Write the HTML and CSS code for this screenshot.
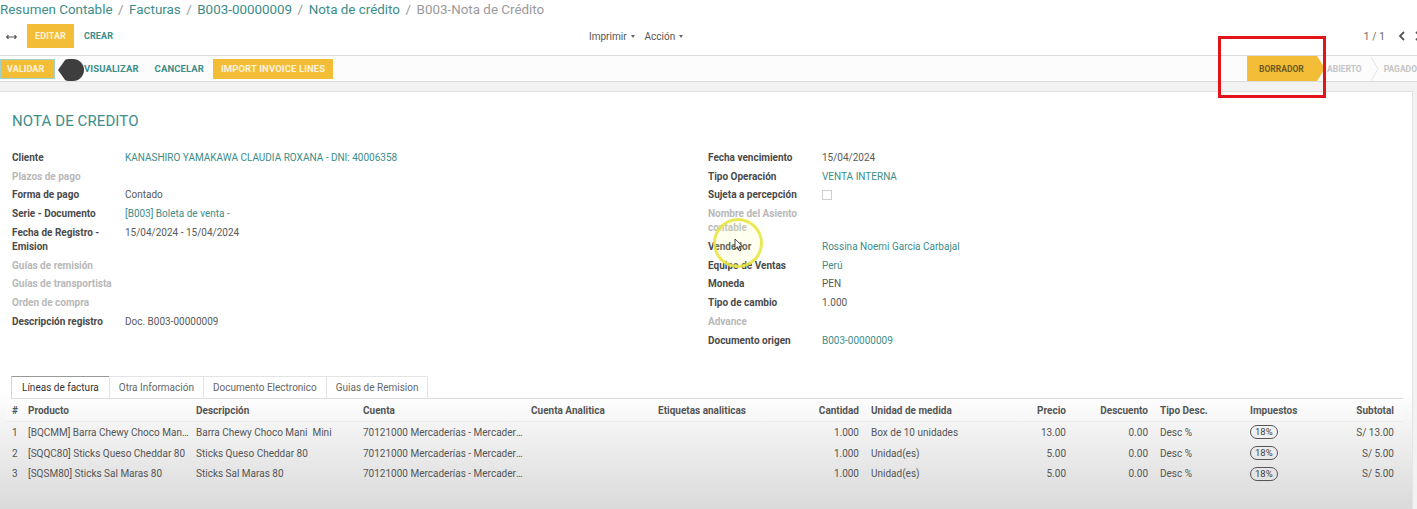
FILE: index.html
```html
<!DOCTYPE html>
<html lang="es">
<head>
<meta charset="utf-8">
<title>B003-Nota de Crédito</title>
<link rel="stylesheet" href="styles.css">
</head>
<body>
<div class="page">
  <div class="cp">
    <div class="bc"><span class="lnk">Resumen Contable</span><span class="sep">/</span><span class="lnk">Facturas</span><span class="sep">/</span><span class="lnk">B003-00000009</span><span class="sep">/</span><span class="lnk">Nota de crédito</span><span class="sep">/</span><span class="cur">B003-Nota de Crédito</span></div>
    <div class="tb">
      <div class="tb-left">
        <svg class="expand" width="11" height="6" viewBox="0 0 11 6"><path d="M0.5 3H10.5M0.5 3L2.5 1.2M0.5 3L2.5 4.8M10.5 3L8.5 1.2M10.5 3L8.5 4.8" stroke="#555" stroke-width="1.2" fill="none"/></svg>
        <span class="btn btn-y">EDITAR</span>
        <span class="btn btn-l">CREAR</span>
      </div>
      <div class="tb-mid">
        <span class="dd">Imprimir <i class="caret"></i></span>
        <span class="dd">Acción <i class="caret"></i></span>
      </div>
      <div class="tb-right">
        <span class="pg">1 / 1</span>
        <svg width="8" height="10" viewBox="0 0 8 10"><path d="M6 1L2 5L6 9" stroke="#555" stroke-width="1.8" fill="none"/></svg>
        <svg width="8" height="10" viewBox="0 0 8 10"><path d="M2 1L6 5L2 9" stroke="#555" stroke-width="1.8" fill="none"/></svg>
      </div>
    </div>
  </div>
  <div class="sb">
    <div class="sb-left">
      <span class="btn btn-y btn-focus">VALIDAR</span>
      <span class="btn btn-l">VISUALIZAR</span>
      <span class="btn btn-l">CANCELAR</span>
      <span class="btn btn-y">IMPORT INVOICE LINES</span>
    </div>
    <div class="states">
      <span class="st st-on">BORRADOR</span>
      <span class="st">ABIERTO</span>
      <svg class="chev" width="9" height="24" viewBox="0 0 9 24"><path d="M1 0L8 12L1 24" stroke="#e4e4e4" stroke-width="1" fill="none"/></svg>
      <span class="st">PAGADO</span>
    </div>
  </div>
  <div class="gap"></div>
  <div class="sheet">
    <h1 class="title">NOTA DE CREDITO</h1>
    <div class="form">
      <div class="grp">
        <div class="lb">Cliente</div><div class="vl lnk">KANASHIRO YAMAKAWA CLAUDIA ROXANA - DNI: 40006358</div>
        <div class="lb mut">Plazos de pago</div><div class="vl"></div>
        <div class="lb">Forma de pago</div><div class="vl">Contado</div>
        <div class="lb">Serie - Documento</div><div class="vl lnk">[B003] Boleta de venta -</div>
        <div class="lb">Fecha de Registro -<br>Emision</div><div class="vl">15/04/2024 - 15/04/2024</div>
        <div class="lb mut">Guías de remisión</div><div class="vl"></div>
        <div class="lb mut">Guías de transportista</div><div class="vl"></div>
        <div class="lb mut">Orden de compra</div><div class="vl"></div>
        <div class="lb">Descripción registro</div><div class="vl">Doc. B003-00000009</div>
      </div>
      <div class="grp">
        <div class="lb">Fecha vencimiento</div><div class="vl">15/04/2024</div>
        <div class="lb">Tipo Operación</div><div class="vl lnk">VENTA INTERNA</div>
        <div class="lb">Sujeta a percepción</div><div class="vl"><span class="chk"></span></div>
        <div class="lb mut">Nombre del Asiento<br>contable</div><div class="vl"></div>
        <div class="lb">Vendedor</div><div class="vl lnk">Rossina Noemi Garcia Carbajal</div>
        <div class="lb">Equipo de Ventas</div><div class="vl lnk">Perú</div>
        <div class="lb">Moneda</div><div class="vl">PEN</div>
        <div class="lb">Tipo de cambio</div><div class="vl">1.000</div>
        <div class="lb mut">Advance</div><div class="vl"></div>
        <div class="lb">Documento origen</div><div class="vl lnk">B003-00000009</div>
      </div>
    </div>
    <div class="tabs">
      <span class="tab tab-on">Líneas de factura</span>
      <span class="tab">Otra Información</span>
      <span class="tab">Documento Electronico</span>
      <span class="tab">Guias de Remision</span>
    </div>
    <div class="lines">
      <div class="row head">
        <span>#</span><span>Producto</span><span>Descripción</span><span>Cuenta</span><span>Cuenta Analitica</span><span>Etiquetas analiticas</span><span class="r">Cantidad</span><span>Unidad de medida</span><span class="r">Precio</span><span class="r">Descuento</span><span>Tipo Desc.</span><span>Impuestos</span><span class="r">Subtotal</span>
      </div>
      <div class="row">
        <span>1</span><span class="tr">[BQCMM] Barra Chewy Choco Mani Mini</span><span>Barra Chewy Choco Mani&nbsp; Mini</span><span class="tr">70121000 Mercaderías - Mercaderías</span><span></span><span></span><span class="r">1.000</span><span>Box de 10 unidades</span><span class="r">13.00</span><span class="r">0.00</span><span>Desc %</span><span><b class="tax">18%</b></span><span class="r">S/ 13.00</span>
      </div>
      <div class="row">
        <span>2</span><span class="tr">[SQQC80] Sticks Queso Cheddar 80</span><span>Sticks Queso Cheddar 80</span><span class="tr">70121000 Mercaderías - Mercaderías</span><span></span><span></span><span class="r">1.000</span><span>Unidad(es)</span><span class="r">5.00</span><span class="r">0.00</span><span>Desc %</span><span><b class="tax">18%</b></span><span class="r">S/ 5.00</span>
      </div>
      <div class="row">
        <span>3</span><span class="tr">[SQSM80] Sticks Sal Maras 80</span><span>Sticks Sal Maras 80</span><span class="tr">70121000 Mercaderías - Mercaderías</span><span></span><span></span><span class="r">1.000</span><span>Unidad(es)</span><span class="r">5.00</span><span class="r">0.00</span><span>Desc %</span><span><b class="tax">18%</b></span><span class="r">S/ 5.00</span>
      </div>
    </div>
  </div>
  <div class="blob"></div>
  <div class="hl"></div>
  <svg class="cursor" width="10" height="14" viewBox="0 0 10 14"><path d="M1 1V11L3.5 8.8L5.5 13L7 12.3L5 8.2H8.5Z" fill="#fff" stroke="#333" stroke-width="0.9"/></svg>
  <div class="redbox"></div>
</div>
</body>
</html>
```

FILE: styles.css
```css
* { box-sizing: border-box; margin: 0; padding: 0; }
html, body { width: 1417px; height: 509px; overflow: hidden; }
body { font-family: Roboto, "Noto Sans", sans-serif; color: #555; background: #f2f2f2; }
.page { position: relative; width: 1417px; height: 509px; overflow: hidden; }

.lnk { color: #3d8d89; }

/* control panel */
.cp { background: #fff; }
.bc { height: 21px; font-size: 13.4px; line-height: 20px; white-space: nowrap; padding-left: 0; }
.bc .sep { color: #999; margin: 0 5.5px; }
.bc .cur { color: #9a9a9a; }

.tb { display: grid; grid-template-columns: 589px 1fr auto; align-items: center; height: 35px; border-bottom: 1px solid #dcdcdc; padding-bottom: 4px; }
.tb-left { display: flex; align-items: center; padding-left: 6px; }
.expand { margin-right: 10px; margin-top: 2px; }
.btn { display: inline-flex; align-items: center; font-size: 9px; font-weight: 700; letter-spacing: 0.1px; white-space: nowrap; }
.btn-y { background: #f3bd37; color: #fdf3dc; padding: 0 7px; }
.btn-l { color: #3d8d89; padding: 0 10px; }
.tb .btn { height: 24px; }
.tb .btn-y { padding: 0 7px 0 7px; width: 47px; justify-content: center; }
.tb-mid { display: flex; gap: 10px; font-size: 10px; color: #555; }
.dd { display: inline-flex; align-items: center; gap: 4px; }
.caret { display: inline-block; width: 0; height: 0; border-left: 2.5px solid transparent; border-right: 2.5px solid transparent; border-top: 3px solid #666; }
.tb-right { display: flex; align-items: center; gap: 8px; margin-right: -5px; font-size: 10px; color: #666; }
.pg { margin-right: 5px; letter-spacing: 0.2px; }

/* statusbar */
.sb { display: flex; align-items: center; height: 26px; background: #fcfcfc; border-bottom: 1px solid #dcdcdc; }
.sb-left { display: flex; align-items: center; }
.sb .btn { height: 20px; font-size: 9.5px; }
.sb .btn-l { padding: 0 8px; }
.sb .btn-y { padding: 0 8px; }
.sb .btn-focus { border: 1px solid #9fd1c9; padding: 0 6px; margin-right: 22px; width: 55px; font-size: 9px; }
.sb-left .btn-l:nth-child(2) { padding-left: 7px; padding-right: 8px; }
.sb-left .btn-l:nth-child(3) { padding-right: 9px; }
.states { margin-left: auto; margin-right: -8px; display: flex; align-items: center; height: 25px; }
.st { font-size: 8.5px; font-weight: 700; color: #c4c4c4; padding: 0 8px 0 2px; height: 25px; display: inline-flex; align-items: center; }
.st-on { background: #f3bd37; color: #6e5a1f; width: 78px; padding: 0 0 0 12px; margin-right: 0; clip-path: polygon(0 0, 70px 0, 78px 50%, 70px 100%, 0 100%); }
.chev { margin-right: 3px; }

.gap { height: 9px; background: #f2f2f2; }

/* sheet */
.sheet { width: 1413px; height: 420px; background: #fff; border-top: 1px solid #e0e0e0; border-right: 1px solid #e4e4e4; padding: 20px 9px 0 12px;
  background: linear-gradient(#ffffff 0, #ffffff 300px, #f6f6f6 325px, #e8e8e8 370px, #d9d9d9 420px); }
.title { font-size: 15px; font-weight: 400; line-height: 18px; color: #3d8d89; letter-spacing: 0.1px; }

.form { display: grid; grid-template-columns: 696px 696px; margin-top: 18.5px; }
.grp { display: grid; grid-template-columns: 113px 1fr; align-content: start; }
.grp + .grp { grid-template-columns: 114px 1fr; }
.lb, .vl { font-size: 10px; line-height: 14px; padding: 2.375px 0; }
.lb { font-weight: 700; color: #4a4a4a; }
.lb.mut { color: #b8b8b8; }
.vl { color: #5a5a5a; }
.vl.lnk { color: #3d8d89; }
.chk { display: inline-block; width: 10px; height: 10px; border: 1px solid #cfcfcf; background: #fff; margin-top: 2px; vertical-align: top; }

.tabs { display: flex; margin-top: 26px; margin-left: -1px; border-bottom: 1px solid #dcdcdc; height: 23px; }
.tab { font-size: 10px; color: #666; line-height: 21px; padding: 0 9px; border: 1px solid #e3e3e3; border-bottom: none; background: #fff; margin-right: -1px; }
.tab-on { color: #333; border-color: #d5d5d5; border-top-color: #999; padding: 0 10px; }

.lines { margin-left: -6px; }
.row { display: grid; grid-template-columns: 16px 168px 167px 168px 127px 148px 65px 135px 72px 82px 90px 90px 66px; height: 20.75px; align-items: center; font-size: 10px; color: #555; }
.row > span { padding: 0 2px 0 6px; white-space: nowrap; overflow: hidden; text-overflow: ellipsis; }
.row > span.tr { padding-right: 0; }
.row > span:first-child { padding: 0 0 0 6px; text-overflow: clip; }
.row > span.r { text-align: right; padding: 0 6px 0 2px; }
.row.head { height: 23px; padding-top: 1px; font-weight: 700; color: #555; background: linear-gradient(#fdfdfd, #f6f6f6); border-bottom: 1px solid #ececec; }
.tax { display: inline-block; font-weight: 400; font-size: 9.5px; color: #444; border: 1.5px solid #555; border-radius: 8px; padding: 0 4px; line-height: 12px; vertical-align: middle; }

/* overlays */
.blob { position: absolute; left: 58px; top: 59px; width: 26px; height: 22px; background: #3e3e3e; clip-path: polygon(0 50%, 30% 0, 100% 0, 100% 100%, 30% 100%); border-radius: 12px; }
.hl { position: absolute; left: 713px; top: 218px; width: 50px; height: 50px; border-radius: 50%; border: 3px solid rgba(232, 228, 60, 0.85); background: rgba(255, 255, 170, 0.18); }
.cursor { position: absolute; left: 734px; top: 238px; }
.redbox { position: absolute; left: 1218px; top: 36px; width: 108px; height: 62px; border: 3px solid #e2151b; }
```
